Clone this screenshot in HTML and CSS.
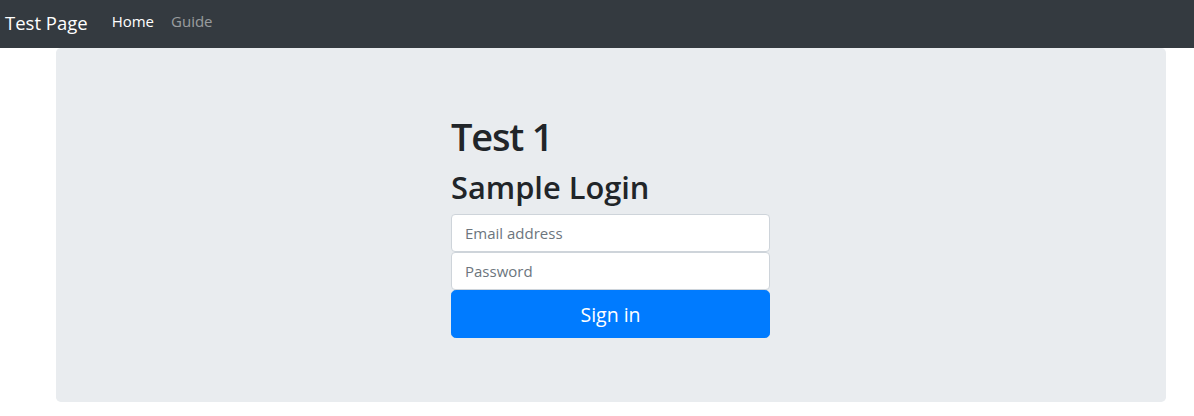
FILE: index.html
```html
<!DOCTYPE html>
<html lang="en">
<head>
<meta charset="utf-8">
<title>Test Page</title>
<link rel="stylesheet" href="styles.css">
</head>
<body>
<nav class="navbar">
  <a class="brand" href="#">Test Page</a>
  <ul class="nav">
    <li><a class="nav-link active" href="#">Home</a></li>
    <li><a class="nav-link" href="#">Guide</a></li>
  </ul>
</nav>
<main class="jumbotron">
  <form class="signin">
    <h1 class="title">Test 1</h1>
    <h2 class="subtitle">Sample Login</h2>
    <input class="field" type="email" placeholder="Email address">
    <input class="field" type="password" placeholder="Password">
    <button class="btn" type="button">Sign in</button>
  </form>
</main>
</body>
</html>
```
FILE: styles.css
```css
* { box-sizing: border-box; }
html, body { margin: 0; padding: 0; }
body {
  font-family: "Open Sans", "Noto Sans", sans-serif;
  color: #212529;
  background: #fff;
  font-size: 16px;
  line-height: 1.5;
}
.navbar {
  height: 48px;
  background: #343a40;
  display: flex;
  align-items: center;
  padding: 0 5px;
}
.brand {
  color: #fff;
  text-decoration: none;
  font-size: 18.5px;
  margin-right: 24px;
  margin-top: -3px;
}
.nav {
  list-style: none;
  margin: 0;
  padding: 0;
  display: flex;
  gap: 17px;
  margin-top: -6px;
}
.nav-link {
  color: rgba(255,255,255,.5);
  text-decoration: none;
  font-size: 15px;
}
.nav-link.active { color: #fff; }
.jumbotron {
  margin-left: 56px;
  width: 1110px;
  height: 354px;
  background: #e9ecef;
  border-radius: 4.8px;
  padding: 64px 32px;
  display: flex;
  justify-content: center;
}
.signin {
  width: 319px;
  margin-right: 1px;
  display: flex;
  flex-direction: column;
}
.title {
  margin: 0 0 8px;
  font-size: 38px;
  font-weight: 600;
  letter-spacing: -1.2px;
  line-height: 48px;
}
.subtitle {
  margin: 0 0 8px;
  font-size: 30.8px;
  font-weight: 600;
  line-height: 38px;
}
.field {
  height: 38px;
  border: 1px solid #ced4da;
  border-radius: 4px;
  padding: 6px 13px;
  font-family: inherit;
  font-size: 15px;
  color: #495057;
  background: #fff;
}
.field::placeholder { color: #6c757d; }
.btn {
  height: 48px;
  border: 1px solid #007bff;
  background: #007bff;
  color: #fff;
  border-radius: 4.8px;
  font-family: inherit;
  font-size: 19.5px;
}
```
